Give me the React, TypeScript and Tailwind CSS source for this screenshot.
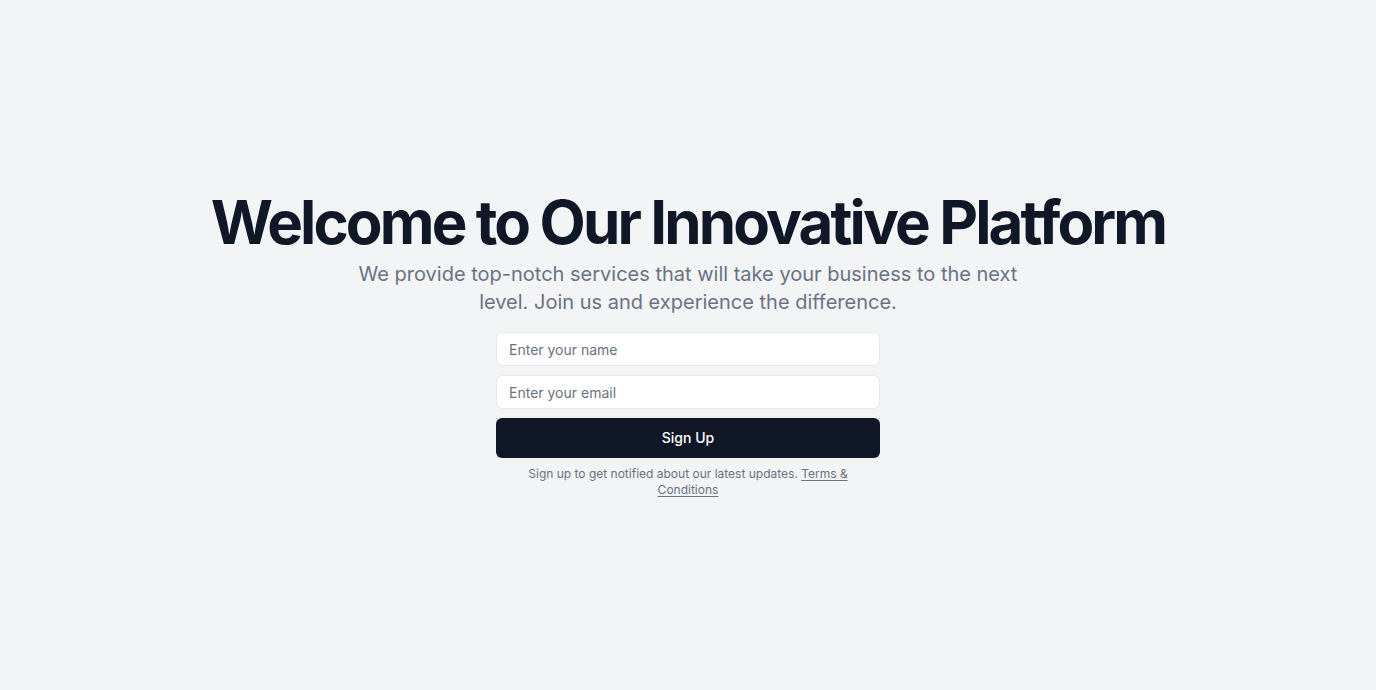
const App = () => {
  return (
    <div className="min-h-screen w-full flex items-center justify-center bg-gray-100 font-['Inter',sans-serif]">
      <div className="flex flex-col items-center text-center px-4 gap-4">
        <div className="flex flex-col items-center gap-2">
          <h1 className="text-6xl font-bold tracking-[-0.048em] leading-none text-gray-900">
            Welcome to Our Innovative Platform
          </h1>
          <p className="max-w-[700px] text-xl text-gray-500">
            We provide top-notch services that will take your business to the
            next level. Join us and experience the difference.
          </p>
        </div>
        <div className="w-full max-w-sm flex flex-col gap-2">
          <form className="flex flex-col gap-[9px]">
            <input
              type="text"
              placeholder="Enter your name"
              className="h-[34px] w-full rounded-md border border-gray-200 bg-white px-3 text-sm text-gray-900 placeholder:text-gray-500 outline-none"
            />
            <input
              type="email"
              placeholder="Enter your email"
              className="h-[34px] w-full rounded-md border border-gray-200 bg-white px-3 text-sm text-gray-900 placeholder:text-gray-500 outline-none"
            />
            <button
              type="submit"
              className="h-10 w-full rounded-md bg-gray-900 text-sm font-medium text-white"
            >
              Sign Up
            </button>
          </form>
          <p className="px-2 text-xs text-gray-500">
            Sign up to get notified about our latest updates.{" "}
            <a href="#" className="underline underline-offset-2">
              Terms &amp; Conditions
            </a>
          </p>
        </div>
      </div>
    </div>
  );
};

export default App;
